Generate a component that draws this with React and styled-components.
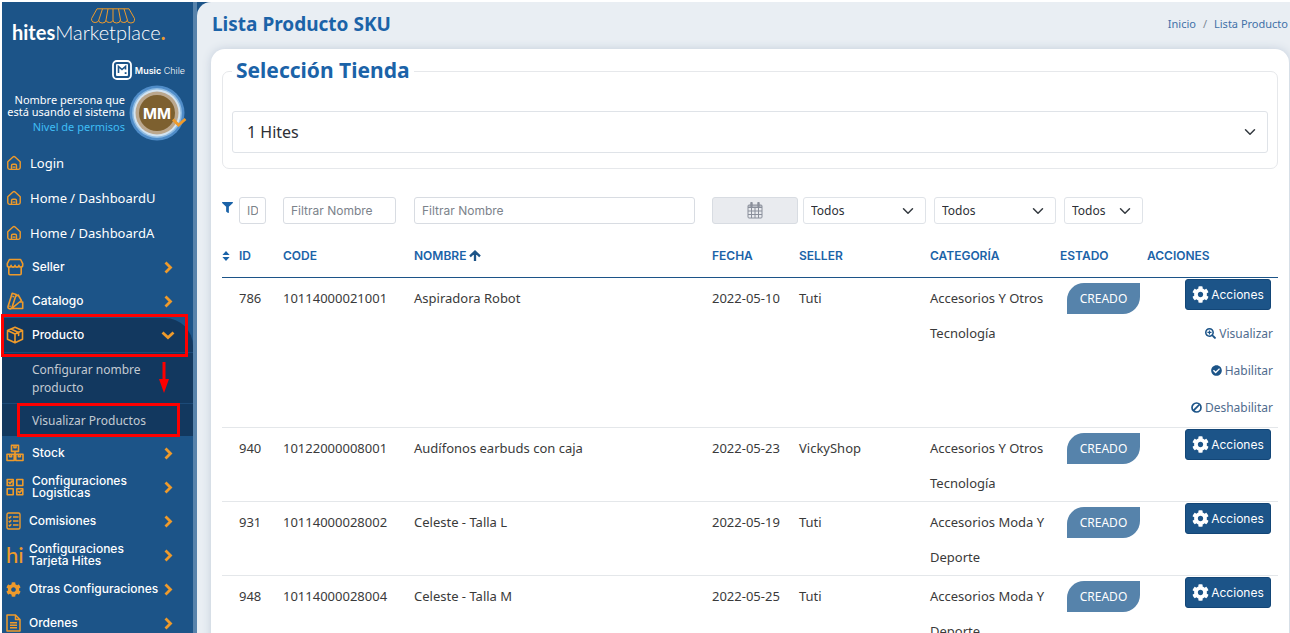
import React, { Fragment } from 'react';
import styled, { createGlobalStyle, css } from 'styled-components';
import { FaCheckCircle, FaCog, FaFilter, FaSearchPlus } from 'react-icons/fa';

const blue = '#1c5488';
const titleBlue = '#1b63a8';
const orange = '#ee9a2b';
const textFont = '"Noto Sans", "Open Sans", sans-serif';
const menuFont = 'Inter, "Noto Sans", sans-serif';

const GlobalStyle = createGlobalStyle`
    * {
        box-sizing: border-box;
    }
    body {
        margin: 0;
        background: #fff;
        font-family: ${textFont};
        font-size: 13px;
        color: #3a3a3a;
    }
    a {
        text-decoration: none;
        color: inherit;
    }
    svg {
        display: block;
        flex: none;
    }
`

const Frame = styled.div`
    height: 100vh;
    padding: 2px 0 0 2px;
    overflow: hidden;
`

const Shell = styled.div`
    display: flex;
    min-height: 100%;
    background: ${blue};
`

const Sidebar = styled.aside`
    flex: none;
    width: 195px;
    border-right: 4px solid #5883ab;
    color: #fff;
`

const Logo = styled.a`
    display: grid;
    height: 51px;
    padding: 6px 0 0 10px;
    align-content: start;
    font-family: Lato, sans-serif;
    font-size: 20px;
    font-weight: 300;
    line-height: 26px;
    svg {
        grid-area: 1 / 1;
        margin-left: 78px;
    }
    span {
        grid-area: 1 / 1;
        padding-top: 11px;
    }
    strong {
        font-weight: 700;
    }
    em {
        color: ${orange};
        font-style: normal;
        font-weight: 700;
    }
`

const StoreName = styled.div`
    display: flex;
    align-items: center;
    justify-content: flex-end;
    gap: 3px;
    height: 34px;
    padding-right: 8px;
    font-family: ${menuFont};
    font-size: 9px;
    font-weight: 300;
    strong {
        font-weight: 600;
    }
`

const Profile = styled.div`
    display: flex;
    align-items: center;
    justify-content: flex-end;
    gap: 4px;
    height: 52px;
    padding-right: 6px;
    font-size: 11px;
    line-height: 12px;
    text-align: right;
    white-space: nowrap;
`

const Role = styled.div`
    margin-top: 3px;
    color: #3fbdf5;
`

const Menu = styled.nav`
    display: flex;
    flex-direction: column;
    padding-top: 6px;
`

const MenuRow = styled.a`
    position: relative;
    display: flex;
    align-items: center;
    gap: 8px;
    height: ${props => props.$plain ? 35 : 34}px;
    padding: 0 20px 0 4px;
    font-family: ${props => props.$plain ? textFont : menuFont};
    font-size: ${props => props.$plain ? 13 : 12}px;
    font-weight: ${props => props.$plain ? 400 : 500};
    line-height: 12px;
    white-space: nowrap;
    ${props => props.$active && css`
        padding-right: 18px;
        background: #12385f;
        border-top-right-radius: 28px;
    `}
`

const MenuText = styled.span`
    flex: 1;
    min-width: 0;
`

const HiMark = styled.span`
    width: 15px;
    font-family: Lato, sans-serif;
    font-size: 22px;
    line-height: 22px;
    color: ${orange};
`

const SubMenu = styled.div`
    background: #12385f;
`

const SubLink = styled.a`
    position: relative;
    display: block;
    padding: 8px 50px 6px 30px;
    border-top: 1px solid #1c4a78;
    font-size: 12px;
    line-height: 18px;
    color: #c3cad2;
    white-space: ${props => props.$single ? 'nowrap' : 'normal'};
`

const Mark = styled.i`
    position: absolute;
    z-index: 1;
    top: -4px;
    bottom: -5px;
    left: -1px;
    right: 5px;
    border: 3px solid #fe0000;
    pointer-events: none;
    ${props => props.$inner && css`
        top: -1px;
        bottom: -1px;
        left: 15px;
        right: 13px;
    `}
`

const MarkArrow = styled.svg`
    position: absolute;
    top: 9px;
    right: 24px;
`

const Main = styled.main`
    flex: 1;
    min-width: 0;
    padding-left: 14px;
    border-top-left-radius: 14px;
    background: #e9eef3;
`

const PageHeader = styled.header`
    display: flex;
    align-items: center;
    justify-content: space-between;
    height: 47px;
    padding: 0 2px 4px 1px;
`

const PageTitle = styled.h1`
    margin: 0;
    font-size: 19px;
    font-weight: 700;
    color: ${titleBlue};
`

const Breadcrumb = styled.nav`
    display: flex;
    gap: 7px;
    font-size: 11px;
    color: #7d8894;
    a {
        color: #4271a8;
    }
`

const Card = styled.section`
    margin-right: 1px;
    padding: 8px 11px;
    border-radius: 14px;
    background: #fff;
    box-shadow: 0 0 10px #c3cddb;
`

const StoreBox = styled.fieldset`
    min-width: 0;
    margin: 0 0 28px;
    padding: 26px 9px 15px;
    border: 1px solid #e6e8eb;
    border-radius: 7px;
`

const StoreLegend = styled.legend`
    padding: 0 4px 2px;
    font-size: 21px;
    font-weight: 700;
    line-height: 26px;
    color: ${titleBlue};
`

const SelectWrap = styled.div`
    display: grid;
    align-items: center;
    svg {
        grid-area: 1 / 1;
        justify-self: end;
        margin-right: 12px;
        pointer-events: none;
    }
`

const Select = styled.select`
    grid-area: 1 / 1;
    width: 100%;
    height: ${props => props.$large ? 42 : 27}px;
    padding: 0 ${props => props.$large ? 14 : 7}px;
    border: 1px solid #dfe3e8;
    border-radius: 3px;
    appearance: none;
    background: #fff;
    font-family: ${textFont};
    font-size: ${props => props.$large ? 16 : 12}px;
    color: #2d3036;
`

const FilterInput = styled.input`
    display: block;
    width: 100%;
    height: 27px;
    padding: 0 7px;
    border: 1px solid #d8dce2;
    border-radius: 3px;
    font-family: ${menuFont};
    font-size: 12px;
    &::placeholder {
        color: #7c838b;
    }
`

const DateButton = styled.button`
    display: flex;
    align-items: center;
    justify-content: center;
    width: 100%;
    height: 27px;
    padding: 0;
    border: 1px solid #d8dce2;
    border-radius: 3px;
    background: #e9ebef;
`

const Table = styled.table`
    width: 100%;
    table-layout: fixed;
    border-collapse: separate;
    border-spacing: 0;
`

const FilterCell = styled.td`
    height: 29px;
    padding: 0 ${props => props.$right || 0}px 0 ${props => props.$left || 0}px;
    vertical-align: top;
    > svg {
        margin-top: 5px;
    }
`

const HeadCell = styled.th`
    height: 52px;
    padding: 8px 0 0;
    border-bottom: 1px solid ${blue};
    font-family: ${menuFont};
    font-size: 12px;
    font-weight: 600;
    text-align: left;
    white-space: nowrap;
    color: ${titleBlue};
    svg {
        display: inline-block;
        vertical-align: -1px;
    }
`

const Cell = styled.td`
    padding: 3px 0 0;
    border-bottom: 1px solid #e4e7ea;
    line-height: 35px;
    vertical-align: top;
`

const ActionCell = styled(Cell)`
    padding: 1px 5px 0 0;
`

const Actions = styled.div`
    display: flex;
    flex-direction: column;
    align-items: flex-end;
`

const Badge = styled.span`
    display: flex;
    align-items: center;
    justify-content: center;
    width: 73px;
    height: 31px;
    margin: 2px 0 0 7px;
    border-radius: 17px 0;
    background: #5683ab;
    font-size: 12px;
    color: #fff;
`

const ActionButton = styled.button`
    display: flex;
    align-items: center;
    justify-content: center;
    gap: 2px;
    width: 86px;
    height: 31px;
    margin-right: 2px;
    padding: 0;
    border: 1px solid #134677;
    border-radius: 3px;
    background: ${blue};
    font-family: ${menuFont};
    font-size: 12px;
    color: #fff;
`

const ActionList = styled.div`
    padding: 5px 0 1px;
`

const ActionLink = styled.a`
    display: flex;
    align-items: center;
    justify-content: flex-end;
    gap: 3px;
    height: 37px;
    font-size: 12px;
    color: #4f6c8e;
    svg {
        color: ${blue};
    }
`

const Stroke = ({ size = 16, width, children }) => (
    <svg width={width || size} height={size} viewBox="0 0 18 18" fill="none" stroke={orange}
        strokeWidth="1.6" strokeLinejoin="round" strokeLinecap="round">
        {children}
    </svg>
)

const HouseIcon = () => (
    <Stroke>
        <path d="M2 7.6 7.8 2.2a1.8 1.8 0 0 1 2.4 0L16 7.6v6.6a2 2 0 0 1-2 2H4a2 2 0 0 1-2-2z"/>
        <path d="M6.2 16v-4a1.5 1.5 0 0 1 1.5-1.5h2.6a1.5 1.5 0 0 1 1.5 1.5v4M8 13.6h2"/>
    </Stroke>
)

const ShopIcon = () => (
    <Stroke size={18}>
        <path d="M3.4 1.5h11.2l2.1 4.2v1.5a1.9 1.9 0 0 1-3.8 0 1.9 1.9 0 0 1-3.9 0 1.9 1.9 0 0 1-3.9 0 1.9 1.9 0 0 1-3.8 0V5.7zM2.8 9.2v6.3a1.2 1.2 0 0 0 1.2 1.2h10a1.2 1.2 0 0 0 1.2-1.2V9.2"/>
    </Stroke>
)

const SwatchIcon = () => (
    <Stroke size={18}>
        <path d="m6.2 1.2 4 1.2-4.2 13a2 2 0 0 1-3.9-1.2zM10.2 4l2-1 3.2 5.5-9 7.3M13.8 10h2.9v6.5H4.3M7 4.5l.4.2M4 14.2h.1"/>
    </Stroke>
)

const BoxIcon = () => (
    <Stroke size={18}>
        <path d="m9 1.2 7.5 3.3v8.7L9 16.8l-7.5-3.6V4.5zM1.5 4.5 9 8l7.5-3.5M9 8v8.6M5 2.9l7.6 3.5v3"/>
    </Stroke>
)

const StockIcon = () => (
    <Stroke size={18}>
        <path d="M5.5 1.2h7v6.2h-7zM1 10.2h7.2v6.3H1zM9.8 10.2H17v6.3H9.8zM8 1.5v2.3h2V1.5M3.6 10.5v2.3h2v-2.3M12.4 10.5v2.3h2v-2.3M9 7.4v2.8"/>
    </Stroke>
)

const ChecksIcon = () => (
    <Stroke size={18}>
        <path d="M1.2 1.5h6v6h-6zM10.8 1.5h6v6h-6zM1.2 10.8h6v6h-6zM10.8 10.8h6v6h-6zM3 4.4l1 1 1.8-2M12.6 13.6l1 1 1.8-2"/>
    </Stroke>
)

const ListIcon = () => (
    <svg width="15" height="18" viewBox="0 0 15 18" fill="none" stroke={orange} strokeWidth="1.4">
        <rect x="1" y="1" width="13" height="16" rx="1.5"/>
        <path d="m2.8 5 .9.9 1.6-1.7M2.8 9l.9.9 1.6-1.7M2.8 13l.9.9 1.6-1.7M7 5h5.5M7 9h5.5M7 13h5.5"/>
    </svg>
)

const FileIcon = () => (
    <svg width="15" height="18" viewBox="0 0 15 18" fill="none" stroke={orange} strokeWidth="1.5" strokeLinejoin="round">
        <path d="M1 1h8.5L14 5.5V17H1zM9.5 1v4.5H14M4 8.8h7M4 11.3h7M4 13.8h7"/>
    </svg>
)

const OpenArrow = () => (
    <svg width="9" height="13" viewBox="0 0 9 13" fill="none" stroke={orange} strokeWidth="2.8">
        <path d="m1.5 1.5 5 5-5 5"/>
    </svg>
)

const CloseArrow = () => (
    <svg width="14" height="9" viewBox="0 0 14 9" fill="none" stroke={orange} strokeWidth="2.8">
        <path d="m1.5 1.5 5.5 5 5.5-5"/>
    </svg>
)

const SortIcon = () => (
    <svg width="8" height="10" viewBox="0 0 8 10" fill="currentColor">
        <path d="m4 0 3.6 4H.4zM4 10 .4 6h7.2z"/>
    </svg>
)

const UpIcon = () => (
    <svg width="12" height="11" viewBox="0 0 12 11" fill="none" stroke={blue} strokeWidth="2.3">
        <path d="M6 11V2M1 6.4l5-4.8 5 4.8"/>
    </svg>
)

const BanIcon = () => (
    <svg width="11" height="11" viewBox="0 0 11 11" fill="none" stroke={blue} strokeWidth="1.7">
        <circle cx="5.5" cy="5.5" r="4.5"/>
        <path d="m2.4 8.6 6.2-6.2"/>
    </svg>
)

const SelectArrow = () => (
    <svg width="12" height="12" viewBox="0 0 16 16" fill="none" stroke="#343a40" strokeWidth="2"
        strokeLinecap="round" strokeLinejoin="round">
        <path d="m2 5 6 6 6-6"/>
    </svg>
)

const Awning = () => (
    <svg width="46" height="16" viewBox="0 0 46 16" fill="none" stroke={orange} strokeWidth="1">
        <path d="M7 .8h32l5.5 9.7v1.7a3.6 2.8 0 0 1-7.2 0 3.6 2.8 0 0 1-7.1 0 3.6 2.8 0 0 1-7.2 0 3.6 2.8 0 0 1-7.1 0 3.6 2.8 0 0 1-7.2 0 3.6 2.8 0 0 1-7.1 0v-1.7zM12.5.8 8.8 12M18 .8l-2 11.2M23 .8V12M28.5.8l2 11.2M34 .8 37.4 12"/>
    </svg>
)

const StoreMark = () => (
    <svg width="20" height="20" viewBox="0 0 20 20" fill="none">
        <rect x="1" y="1" width="18" height="18" rx="4" stroke="#fff" strokeWidth="1.8"/>
        <rect x="4" y="4" width="12" height="12" rx="1" fill="#fff"/>
        <path d="M6.5 13V6.5l3.5 3 3.5-3v3" stroke={blue} strokeWidth="1.6"/>
        <path d="M12.7 12.2h1.8V14h-1.8z" fill={blue}/>
    </svg>
)

const Avatar = () => (
    <svg width="58" height="56" viewBox="0 0 58 56">
        <circle cx="28" cy="28" r="27.5" fill="#4f8cc8"/>
        <circle cx="28" cy="28" r="25" fill="#8dbbe3"/>
        <circle cx="28" cy="28" r="23.5" fill="#d3e3f0"/>
        <circle cx="28" cy="28" r="21.5" fill="#bba78d"/>
        <circle cx="28" cy="28" r="18" fill="#7d602f"/>
        <text x="28" y="33.5" fill="#fff" fontFamily="Inter" fontSize="15" fontWeight="700" textAnchor="middle">MM</text>
        <path d="m44 34.5 5.5 5.5 7-6" fill="none" stroke={orange} strokeWidth="2.8"/>
    </svg>
)

const CalendarIcon = () => (
    <svg width="16" height="17" viewBox="0 0 16 17" fill="none" stroke="#8a8f9b">
        <rect x="1" y="3" width="14" height="13" rx="1"/>
        <path d="M1 4h14M1 5.5h14M1 9h14M1 12.5h14M4.5 6v10M8 6v10M11.5 6v10"/>
        <path d="M4.5 1v3M11.5 1v3" strokeWidth="2.4" strokeLinecap="round"/>
    </svg>
)

const links = [
    { text: 'Login' },
    { text: 'Home / DashboardU' },
    { text: 'Home / DashboardA' },
]

const topMenu = [
    { text: 'Seller', icon: <ShopIcon/> },
    { text: 'Catalogo', icon: <SwatchIcon/> },
]

const bottomMenu = [
    { text: 'Stock', icon: <StockIcon/> },
    { text: 'Configuraciones', second: 'Logisticas', icon: <ChecksIcon/> },
    { text: 'Comisiones', icon: <ListIcon/> },
    { text: 'Configuraciones', second: 'Tarjeta Hites', icon: <HiMark>hi</HiMark> },
    { text: 'Otras Configuraciones', icon: <FaCog size={15} color={orange}/> },
    { text: 'Ordenes', icon: <FileIcon/> },
]

const products = [
    { id: 786, code: '10114000021001', name: 'Aspiradora Robot', date: '2022-05-10', seller: 'Tuti', category: 'Accesorios Y Otros Tecnología', open: true },
    { id: 940, code: '10122000008001', name: 'Audífonos earbuds con caja', date: '2022-05-23', seller: 'VickyShop', category: 'Accesorios Y Otros Tecnología' },
    { id: 931, code: '10114000028002', name: 'Celeste - Talla L', date: '2022-05-19', seller: 'Tuti', category: 'Accesorios Moda Y Deporte' },
    { id: 948, code: '10114000028004', name: 'Celeste - Talla M', date: '2022-05-25', seller: 'Tuti', category: 'Accesorios Moda Y Deporte' },
]

const MenuItem = ({ item }) => (
    <MenuRow href="#">
        {item.icon}
        <MenuText>{item.text}{item.second && <Fragment><br/>{item.second}</Fragment>}</MenuText>
        <OpenArrow/>
    </MenuRow>
)

const FilterSelect = ({ label }) => (
    <SelectWrap>
        <Select aria-label={label}>
            <option>Todos</option>
        </Select>
        <SelectArrow/>
    </SelectWrap>
)

const SideMenu = () => (
    <Sidebar>
        <Logo href="#">
            <Awning/>
            <span><strong>hites</strong>Marketplace<em>.</em></span>
        </Logo>
        <StoreName>
            <StoreMark/>
            <span><strong>Music</strong> Chile</span>
        </StoreName>
        <Profile>
            <div>
                Nombre persona que<br/>está usando el sistema
                <Role>Nivel de permisos</Role>
            </div>
            <Avatar/>
        </Profile>
        <Menu>
            {links.map(item => (
                <MenuRow href="#" $plain key={item.text}>
                    <HouseIcon/>
                    <MenuText>{item.text}</MenuText>
                </MenuRow>
            ))}
            {topMenu.map(item => <MenuItem item={item} key={item.text}/>)}
            <MenuRow href="#" $active>
                <BoxIcon/>
                <MenuText>Producto</MenuText>
                <CloseArrow/>
                <Mark/>
            </MenuRow>
            <SubMenu>
                <SubLink href="#">
                    Configurar nombre producto
                    <MarkArrow width="10" height="31" viewBox="0 0 10 31">
                        <path d="M3.5 0h3v17H10L5 31 0 17h3.5z" fill="#fe0000"/>
                    </MarkArrow>
                </SubLink>
                <SubLink href="#" $single>
                    Visualizar Productos
                    <Mark $inner/>
                </SubLink>
            </SubMenu>
            {bottomMenu.map(item => <MenuItem item={item} key={item.text + item.second}/>)}
        </Menu>
    </Sidebar>
)

const ProductRow = ({ product }) => (
    <tr>
        <Cell/>
        <Cell>{product.id}</Cell>
        <Cell>{product.code}</Cell>
        <Cell>{product.name}</Cell>
        <Cell>{product.date}</Cell>
        <Cell>{product.seller}</Cell>
        <Cell>{product.category}</Cell>
        <Cell><Badge>CREADO</Badge></Cell>
        <ActionCell>
            <Actions>
                <ActionButton type="button"><FaCog size={17}/>Acciones</ActionButton>
                {product.open && (
                    <ActionList>
                        <ActionLink href="#"><FaSearchPlus size={11}/>Visualizar</ActionLink>
                        <ActionLink href="#"><FaCheckCircle size={11}/>Habilitar</ActionLink>
                        <ActionLink href="#"><BanIcon/>Deshabilitar</ActionLink>
                    </ActionList>
                )}
            </Actions>
        </ActionCell>
    </tr>
)

const ProductTable = () => (
    <Table>
        <colgroup>
            <col width="17"/>
            <col width="44"/>
            <col width="131"/>
            <col/>
            <col width="87"/>
            <col width="131"/>
            <col width="130"/>
            <col width="87"/>
            <col width="131"/>
        </colgroup>
        <thead>
            <tr>
                <FilterCell><FaFilter size={11} color={titleBlue}/></FilterCell>
                <FilterCell $right={17}><FilterInput placeholder="ID" aria-label="Filtrar ID"/></FilterCell>
                <FilterCell $right={18}><FilterInput placeholder="Filtrar Nombre" aria-label="Filtrar code"/></FilterCell>
                <FilterCell $right={17}><FilterInput placeholder="Filtrar Nombre" aria-label="Filtrar nombre"/></FilterCell>
                <FilterCell $right={1}><DateButton type="button" aria-label="Filtrar fecha"><CalendarIcon/></DateButton></FilterCell>
                <FilterCell $left={4} $right={4}><FilterSelect label="Seller"/></FilterCell>
                <FilterCell $left={4} $right={4}><FilterSelect label="Categoría"/></FilterCell>
                <FilterCell $left={4} $right={4}><FilterSelect label="Estado"/></FilterCell>
                <FilterCell/>
            </tr>
            <tr>
                <HeadCell aria-label="Orden"><SortIcon/></HeadCell>
                <HeadCell>ID</HeadCell>
                <HeadCell>CODE</HeadCell>
                <HeadCell>NOMBRE <UpIcon/></HeadCell>
                <HeadCell>FECHA</HeadCell>
                <HeadCell>SELLER</HeadCell>
                <HeadCell>CATEGORÍA</HeadCell>
                <HeadCell>ESTADO</HeadCell>
                <HeadCell>ACCIONES</HeadCell>
            </tr>
        </thead>
        <tbody>
            {products.map(product => <ProductRow product={product} key={product.id}/>)}
        </tbody>
    </Table>
)

const App = () => {
    return (
        <Fragment>
            <GlobalStyle/>
            <Frame>
                <Shell>
                    <SideMenu/>
                    <Main>
                        <PageHeader>
                            <PageTitle>Lista Producto SKU</PageTitle>
                            <Breadcrumb>
                                <a href="#">Inicio</a>
                                <span>/</span>
                                <a href="#">Lista Producto</a>
                            </Breadcrumb>
                        </PageHeader>
                        <Card>
                            <StoreBox>
                                <StoreLegend>Selección Tienda</StoreLegend>
                                <SelectWrap>
                                    <Select $large aria-label="Selección Tienda">
                                        <option>1 Hites</option>
                                    </Select>
                                    <SelectArrow/>
                                </SelectWrap>
                            </StoreBox>
                            <ProductTable/>
                        </Card>
                    </Main>
                </Shell>
            </Frame>
        </Fragment>
    )
}

export default App
